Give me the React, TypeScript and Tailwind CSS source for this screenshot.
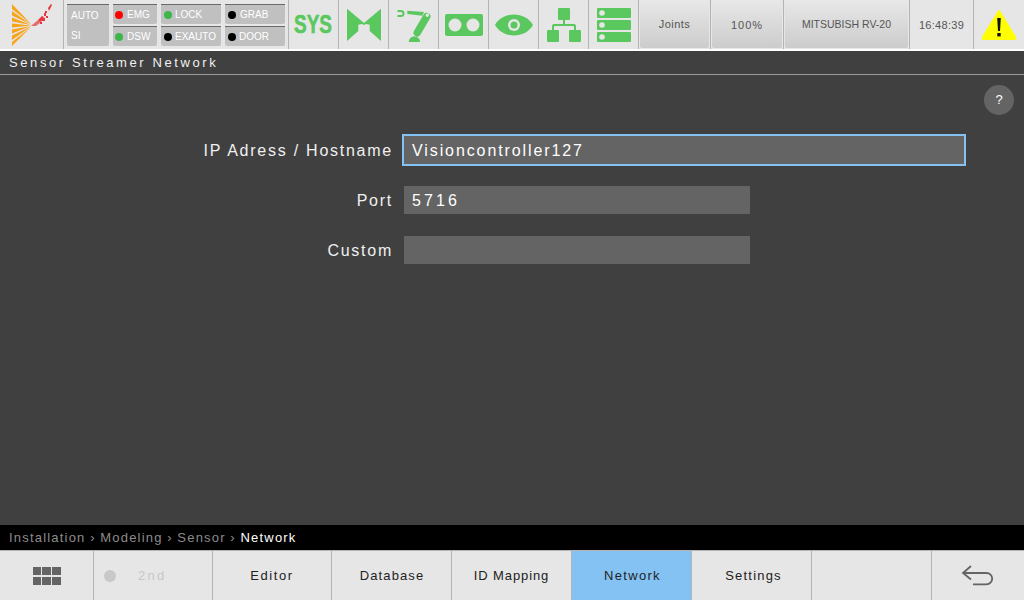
const font = "font-['Liberation_Sans',Arial,sans-serif]";

const Lamp = ({ color, label, className, tight }: { color: string; label: string; className: string; tight?: boolean }) => (
  <div className={`flex items-center bg-[#c0c0c0] border-t border-t-[#6a6a6a] rounded-b-[2px] h-[20px] text-[10px] text-white ${className}`}>
    <span className={`w-[8px] h-[8px] rounded-full ${tight ? "mr-[3px]" : "mr-[4px]"} ${color}`} />
    {label}
  </div>
);

const IconCell = ({ children }: { children: React.ReactNode }) => (
  <div className="w-[50px] h-full shrink-0 border-r border-[#b4b4b4] flex items-center justify-center">{children}</div>
);

const GradientCell = ({ label, className, textClass }: { label: string; className: string; textClass: string }) => (
  <div className={`h-full shrink-0 border-r border-[#b4b4b4] pl-[1px] pr-[1px] pb-[1px] ${className}`}>
    <div className={`w-full h-full flex items-center justify-center rounded-b-[2px] bg-gradient-to-b from-[#e8e8e8] to-[#cccccc] text-[#555555] ${textClass}`}>
      {label}
    </div>
  </div>
);

const Field = ({ label, value, focus, valueClass }: { label: string; value: string; focus?: boolean; valueClass?: string }) => (
  <div className="flex items-center h-[32px]">
    <div className="w-[393px] text-right text-[#f0f0f0] text-[16px] tracking-[1.75px] pt-[1px] shrink-0">{label}</div>
    {focus ? (
      <div className={`ml-[9px] w-[564px] h-[32px] border-2 border-[#84c2f4] bg-[#646464] flex items-center pl-[8px] pt-[1px] text-white text-[16px] ${valueClass}`}>
        {value}
      </div>
    ) : (
      <div className={`ml-[11px] w-[346px] h-[28px] bg-[#646464] flex items-center pl-[8px] pt-[1px] text-white text-[16px] ${valueClass}`}>
        {value}
      </div>
    )}
  </div>
);

const BottomTab = ({ label, active, className }: { label: string; active?: boolean; className: string }) => (
  <div className={`h-full shrink-0 border-r border-[#b4b4b4] flex items-center justify-center pt-[1px] text-[13px] text-[#222222] ${active ? "bg-[#84c2f4]" : ""} ${className}`}>
    {label}
  </div>
);

const App = () => {
  const green = "#5ac85f";
  return (
    <div className={`w-[1024px] h-[600px] overflow-hidden flex flex-col bg-[#404040] ${font}`}>
      {/* top bar */}
      <div className="h-[51px] shrink-0 bg-[#e6e6e6] border-b-2 border-white flex">
        <div className="w-[64px] h-full shrink-0 border-r border-[#b4b4b4] flex items-center justify-center">
          <svg width="42" height="44" viewBox="0 0 42 44">
            <g fill="#f7a41d">
              <path d="M1 1 L20 21 L1 6Z" />
              <path d="M1 8 L20 21.5 L1 12.5Z" />
              <path d="M1 14.5 L20 22 L1 18.5Z" />
              <path d="M1 20.5 L20 22.5 L1 24.5Z" />
              <path d="M1 26.5 L20 23 L1 30.5Z" />
              <path d="M1 32.5 L20 23.5 L1 37Z" />
              <path d="M1 39 L20 24 L1 43Z" />
            </g>
            <g fill="#e8343a">
              <path d="M20 23 L27 17 L30 19 L25 23Z" opacity="0.7" />
              <path d="M27 17 L31 13 L33 14 L30 19Z" />
              <rect x="31" y="15" width="3" height="3" />
              <rect x="29" y="19" width="2" height="2" />
              <rect x="33" y="10" width="2" height="3" />
              <rect x="35" y="13" width="2" height="2" />
              <path d="M37 5 L40 1 L41 2 L38 8Z" />
              <rect x="34" y="8" width="2" height="2" />
            </g>
          </svg>
        </div>
        <div className="w-[225px] h-full shrink-0 border-r border-[#b4b4b4] pl-[3px] pt-[4px] flex gap-[4px]">
          <div className="w-[42px] h-[42px] bg-[#c0c0c0] border-t border-t-[#6a6a6a] rounded-b-[2px] text-[10px] text-white pl-[4px] flex flex-col justify-between py-[3px]">
            <span>AUTO</span>
            <span>SI</span>
          </div>
          <div className="flex flex-col gap-[2px] w-[44px]">
            <Lamp color="bg-[#ff0000]" label="EMG" className="pl-[2px]" />
            <Lamp color="bg-[#3cb64a]" label="DSW" className="pl-[2px]" />
          </div>
          <div className="flex flex-col gap-[2px] w-[60px]">
            <Lamp color="bg-[#3cb64a]" label="LOCK" className="pl-[3px]" tight />
            <Lamp color="bg-black" label="EXAUTO" className="pl-[3px]" tight />
          </div>
          <div className="flex flex-col gap-[2px] w-[60px]">
            <Lamp color="bg-black" label="GRAB" className="pl-[3px]" />
            <Lamp color="bg-black" label="DOOR" className="pl-[3px]" tight />
          </div>
        </div>
        <div className="w-[50px] h-full shrink-0 border-r border-[#b4b4b4] flex items-center justify-center">
          <span className="text-[#5ac85f] font-bold text-[25px] scale-x-[0.76] [-webkit-text-stroke:0.6px_#5ac85f]">SYS</span>
        </div>
        <IconCell>
          <svg width="36" height="36" viewBox="0 0 36 36" fill={green}>
            <path d="M1 1.7 L18 16 L35 1.7 V34 L23.7 24 V17.7 L20 17 L18 18 L16 17 L12.3 17.7 V24 L1 34Z" />
          </svg>
        </IconCell>
        <IconCell>
          <svg width="36" height="36" viewBox="0 0 36 36" fill={green}>
            <path d="M1.5 4 H5 a2.5 2.5 0 0 1 0 5 H1.5" fill="none" stroke={green} strokeWidth="2" />
            <path d="M11.3 3.7 L28 5 L26.3 8.7 L11.3 7Z" />
            <path d="M30.7 9.7 L21.3 25.7" stroke={green} strokeWidth="7.5" strokeLinecap="round" />
            <circle cx="31.3" cy="8.3" r="1.7" fill="#e6e6e6" />
            <path d="M12.7 35 a5.7 5.7 0 0 1 11.4 0Z" />
          </svg>
        </IconCell>
        <IconCell>
          <svg width="38" height="22" viewBox="0 0 38 22">
            <rect width="38" height="22" rx="2" fill={green} />
            <circle cx="10" cy="11" r="6.5" fill="#e6e6e6" />
            <circle cx="28" cy="11" r="6.5" fill="#e6e6e6" />
          </svg>
        </IconCell>
        <IconCell>
          <svg width="38" height="22" viewBox="0 0 38 22">
            <path d="M0 11 C8 -3 30 -3 38 11 C30 25 8 25 0 11Z" fill={green} />
            <circle cx="19" cy="11" r="6" fill="#e6e6e6" />
            <circle cx="19" cy="11" r="3.5" fill={green} />
          </svg>
        </IconCell>
        <IconCell>
          <svg width="34" height="34" viewBox="0 0 34 34" fill={green}>
            <rect x="11" y="0" width="12" height="12" rx="1" />
            <rect x="0" y="22" width="12" height="12" rx="1" />
            <rect x="22" y="22" width="12" height="12" rx="1" />
            <path d="M16 12 h2 v4 h9 a2 2 0 0 1 2 2 v4 h-2 v-3 a1 1 0 0 0-1-1 h-18 a1 1 0 0 0-1 1 v3 h-2 v-4 a2 2 0 0 1 2-2 h9z" />
          </svg>
        </IconCell>
        <IconCell>
          <svg width="34" height="34" viewBox="0 0 34 34">
            {[0, 12, 24].map((y) => (
              <g key={y}>
                <rect x="0" y={y} width="34" height="10" rx="1" fill={green} />
                <circle cx="5" cy={y + 5} r="2.8" fill="#e6e6e6" />
              </g>
            ))}
          </svg>
        </IconCell>
        <GradientCell label="Joints" className="w-[72px]" textClass="text-[11px] tracking-[0.5px] pt-[1px]" />
        <GradientCell label="100%" className="w-[73px]" textClass="text-[11px] tracking-[1px] pt-[2px]" />
        <GradientCell label="MITSUBISH RV-20" className="w-[126px]" textClass="text-[10.5px] pt-[2px]" />
        <div className="w-[64px] h-full shrink-0 border-r border-[#b4b4b4] flex items-center justify-center pt-[1px] text-[11px] tracking-[0.3px] text-[#555555]">
          16:48:39
        </div>
        <div className="flex-1 h-full flex items-center justify-center">
          <svg width="36" height="32" viewBox="0 0 36 32">
            <path d="M18 2 L34 28 Q35 30 33 30 L3 30 Q1 30 2 28Z" fill="#ffff00" stroke="#ffff00" strokeWidth="2" strokeLinejoin="round" />
            <path d="M16.2 9 h3.6 l-0.8 13 h-2z" fill="#111111" />
            <rect x="16.3" y="24" width="3.4" height="3.4" fill="#111111" />
          </svg>
        </div>
      </div>

      {/* title */}
      <div className="h-[24px] shrink-0 border-b border-[#9a9a9a] flex items-center pl-[9px] pt-[1px] text-[13px] tracking-[2.6px] text-[#f0f0f0]">
        Sensor Streamer Network
      </div>

      {/* content */}
      <div className="flex-1 relative flex flex-col gap-[18px] pt-[59px]">
        <div className="absolute right-[10px] top-[10px] w-[30px] h-[30px] rounded-full bg-[#646464] flex items-center justify-center text-white text-[13px]">
          ?
        </div>
        <Field label="IP Adress / Hostname" value="Visioncontroller127" focus valueClass="tracking-[1.9px]" />
        <Field label="Port" value="5716" valueClass="tracking-[3.1px]" />
        <Field label="Custom" value="" />
      </div>

      {/* breadcrumb */}
      <div className="h-[25px] shrink-0 bg-black flex items-center pl-[9px] text-[13px] tracking-[1.2px] text-[#8c8c8c] gap-[4.6px]">
        <span>Installation</span>
        <span>›</span>
        <span>Modeling</span>
        <span>›</span>
        <span>Sensor</span>
        <span>›</span>
        <span className="text-white">Network</span>
      </div>

      {/* bottom tabs */}
      <div className="h-[50px] shrink-0 bg-[#e6e6e6] border-t border-[#b4b4b4] flex">
        <div className="w-[94px] h-full shrink-0 border-r border-[#b4b4b4] flex items-center justify-center">
          <div className="grid grid-cols-3 gap-x-[1px] gap-y-[2px] w-[28px]">
            {[0, 1, 2, 3, 4, 5].map((i) => (
              <div key={i} className="h-[8px] bg-[#646464]" />
            ))}
          </div>
        </div>
        <div className="w-[119px] h-full shrink-0 border-r border-[#b4b4b4] flex items-center pl-[10px] pt-[1px] text-[13px] tracking-[2.3px] text-[#c8c8c8]">
          <span className="w-[12px] h-[12px] rounded-full bg-[#c8c8c8] mr-[22px]" />
          2nd
        </div>
        <BottomTab label="Editor" className="w-[119px] tracking-[1.6px]" />
        <BottomTab label="Database" className="w-[120px] tracking-[1.1px] pl-[1px]" />
        <BottomTab label="ID Mapping" className="w-[120px] tracking-[0.9px]" />
        <BottomTab label="Network" active className="w-[120px] tracking-[1.3px] pl-[2px]" />
        <BottomTab label="Settings" className="w-[120px] tracking-[1.2px] pl-[4px]" />
        <BottomTab label="" className="w-[120px]" />
        <div className="flex-1 h-full flex items-center justify-center">
          <svg width="34" height="22" viewBox="0 0 34 22" fill="none" stroke="#646464" strokeWidth="1.8">
            <path d="M10 1 L2 8 L10 14.5" />
            <path d="M2 8 H25.5 a5.7 5.7 0 0 1 0 11.4 H12" />
          </svg>
        </div>
      </div>
    </div>
  );
};

export default App;
